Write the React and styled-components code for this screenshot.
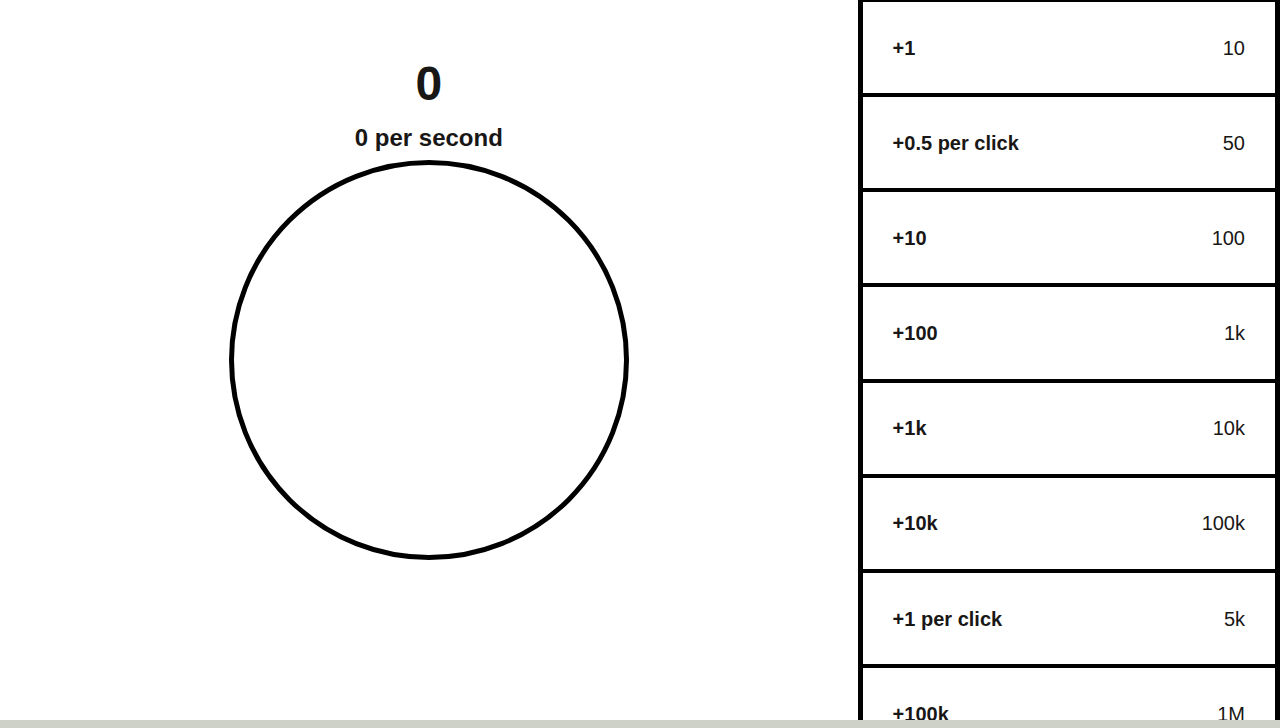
import React, { useState } from "react";
import styled, { createGlobalStyle } from "styled-components";

const GlobalStyle = createGlobalStyle`
  *, *::before, *::after { box-sizing: border-box; }
  body {
    margin: 0;
    background: #ced1c7;
    color: #191716;
    font-family: "Liberation Sans", Arial, sans-serif;
  }
`;

const Page = styled.div`
  display: flex;
  height: calc(100vh - 8px);
  overflow: hidden;
  background: #fff;
`;

const Clicker = styled.main`
  flex: 1;
  display: flex;
  flex-direction: column;
  align-items: center;
  padding-top: 56px;
`;

const Score = styled.h1`
  margin: 0 0 12px;
  font-size: 48px;
  line-height: 56px;
  font-weight: 700;
`;

const Rate = styled.h2`
  margin: 0 0 8px;
  font-size: 24px;
  line-height: 28px;
  font-weight: 700;
`;

const CircleButton = styled.button`
  width: 400px;
  aspect-ratio: 1;
  flex: none;
  padding: 0;
  border: 5px solid #000;
  border-radius: 50%;
  background: #fff;
  cursor: pointer;
`;

const Shop = styled.aside`
  width: 33%;
  height: 100%;
  overflow: hidden;
  display: grid;
  grid-auto-rows: 13.217%;
`;

const Upgrade = styled.button`
  display: flex;
  align-items: center;
  justify-content: space-between;
  padding: 0 30px;
  border: 0 solid #000;
  border-width: 2px 5px;
  background: #fff;
  color: inherit;
  font-family: inherit;
  font-size: 20px;
  line-height: 24px;
  cursor: pointer;
`;

const Gain = styled.span`
  font-weight: 700;
`;

const Price = styled.span`
  font-weight: 400;
`;

const upgrades = [
  { gain: "+1", price: "10", cost: 10, rate: 1 },
  { gain: "+0.5 per click", price: "50", cost: 50, click: 0.5 },
  { gain: "+10", price: "100", cost: 100, rate: 10 },
  { gain: "+100", price: "1k", cost: 1000, rate: 100 },
  { gain: "+1k", price: "10k", cost: 10000, rate: 1000 },
  { gain: "+10k", price: "100k", cost: 100000, rate: 10000 },
  { gain: "+1 per click", price: "5k", cost: 5000, click: 1 },
  { gain: "+100k", price: "1M", cost: 1000000, rate: 100000 },
];

export default function App() {
  const [game, setGame] = useState({ score: 0, rate: 0, click: 1 });

  const buy = ({ cost, rate = 0, click = 0 }) =>
    setGame((g) =>
      g.score < cost
        ? g
        : { score: g.score - cost, rate: g.rate + rate, click: g.click + click }
    );

  return (
    <>
      <GlobalStyle />
      <Page>
        <Clicker>
          <Score>{game.score}</Score>
          <Rate>{game.rate} per second</Rate>
          <CircleButton
            type="button"
            aria-label="Click"
            onClick={() => setGame((g) => ({ ...g, score: g.score + g.click }))}
          />
        </Clicker>
        <Shop>
          {upgrades.map((u) => (
            <Upgrade key={u.gain} type="button" onClick={() => buy(u)}>
              <Gain>{u.gain}</Gain>
              <Price>{u.price}</Price>
            </Upgrade>
          ))}
        </Shop>
      </Page>
    </>
  );
}
